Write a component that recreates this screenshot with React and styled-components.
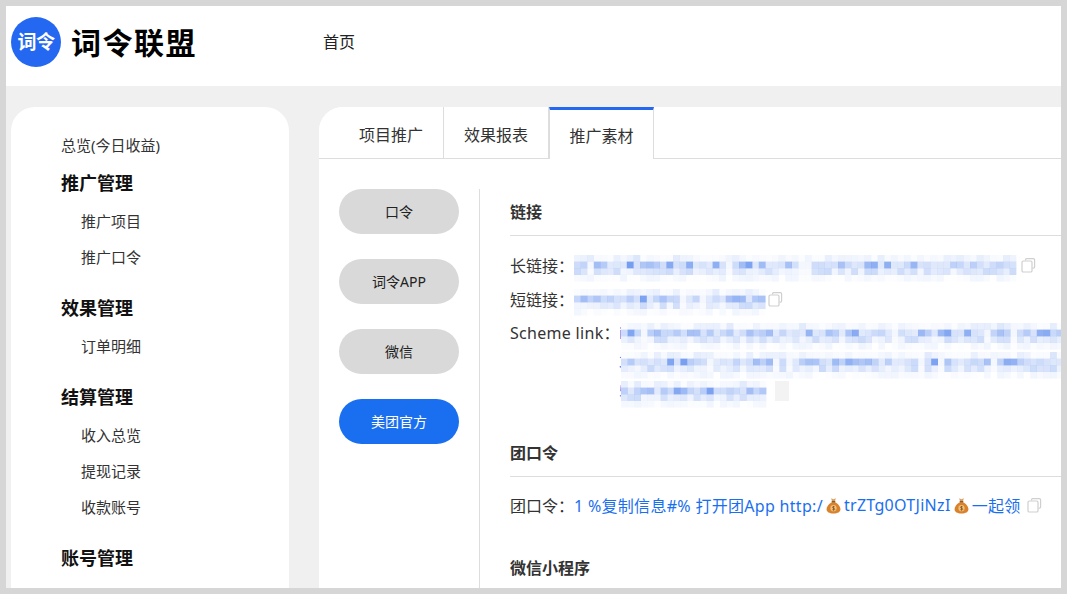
import React from "react";
import styled, { createGlobalStyle } from "styled-components";

const Global = createGlobalStyle`
  html, body { margin: 0; padding: 0; background: #d6d6d6; }
  * { box-sizing: border-box; }
  body { font-family: "Noto Sans", "Noto Sans CJK SC", sans-serif; color: #333; }
`;
const Frame = styled.div`
  width: 1067px; height: 594px; padding: 6px; overflow: hidden; background: #d6d6d6;
`;
const Page = styled.div`
  width: 1055px; height: 582px; overflow: hidden; background: #f0f0f0;
  display: flex; flex-direction: column;
`;
const Header = styled.header`
  flex: none; height: 80px; background: #fff; display: flex; align-items: center; padding: 0 0 8px 5px;
`;
const LogoMark = styled.div`
  width: 50px; height: 50px; border-radius: 50%; background: #2468f2; color: #fff;
  font-size: 19px; font-weight: 700; line-height: 48px; text-align: center; flex: none;
  font-family: "Noto Sans CJK SC", sans-serif; letter-spacing: -0.5px;
`;
const Brand = styled.div`
  margin-left: 10px; width: 252px; font-size: 30px; font-weight: 700; color: #000; letter-spacing: 1.5px;
  font-family: "Noto Sans CJK SC", sans-serif; line-height: 38px; padding-bottom: 2px;
`;
const TopLink = styled.a`
  font-size: 16px; color: #222; font-family: "Noto Sans CJK SC", sans-serif; padding-bottom: 2px;
`;
const Body = styled.div`
  flex: none; display: flex; gap: 30px; padding: 21px 0 0 5px; align-items: flex-start;
`;
const Sidebar = styled.nav`
  flex: none; width: 278px; height: 520px; background: #fff; border-radius: 24px;
  padding: 20px 0 0 50px; font-family: "Noto Sans", "Noto Sans CJK SC", sans-serif;
`;
const Overview = styled.div`
  font-size: 15px; line-height: 36px; height: 36px; color: #333;
`;
const Group = styled.div`
  margin-bottom: 13px;
`;
const GroupTitle = styled.div`
  font-size: 18px; font-weight: 700; line-height: 40px; color: #111;
`;
const NavItem = styled.div`
  font-size: 15px; line-height: 36px; padding-left: 20px; color: #333;
`;
const Main = styled.main`
  flex: none; width: 780px; height: 520px; background: #fff; border-radius: 24px 0 0 0; overflow: hidden;
  font-family: "Noto Sans", "Noto Sans CJK SC", sans-serif;
`;
const Tabs = styled.div`
  display: flex; height: 52px; border-bottom: 1px solid #ddd;
`;
const Tab = styled.div`
  height: ${p => (p.$active ? "52px" : "51px")};
  width: ${p => p.$w}px; flex: none; text-align: center;
  font-size: 16px; color: #333; line-height: ${p => (p.$active ? "52px" : "56px")};
  padding-left: ${p => p.$pl || 0}px;
  border-right: 1px solid #ddd;
  border-left: ${p => (p.$active ? "1px solid #ddd" : "none")};
  border-top: ${p => (p.$active ? "3px solid #2468f2" : "none")};
  background: #fff;
`;
const Pane = styled.div`
  display: flex; padding: 30px 0 0 20px;
`;
const SideTabs = styled.div`
  flex: none; width: 120px; margin-right: 20px; display: flex; flex-direction: column; gap: 25px;
`;
const Pill = styled.div`
  height: 45px; border-radius: 23px; text-align: center; line-height: 45px; font-size: 14px;
  background: ${p => (p.$active ? "#1a6ff0" : "#d9d9d9")};
  color: ${p => (p.$active ? "#fff" : "#222")};
`;
const Content = styled.div`
  flex: none; width: 620px; border-left: 1px solid #ddd; padding-left: 30px; height: 420px;
`;
const SectionTitle = styled.h3`
  margin: 0; height: 47px; line-height: 46px; font-size: 16px; font-weight: 700; color: #333;
  border-bottom: ${p => (p.$plain ? "none" : "1px solid #ddd")};
  margin-top: ${p => p.$top || 0}px;
`;
const Rows = styled.div`
  padding-top: ${p => p.$pt ?? 12}px;
`;
const Row = styled.div`
  display: flex; align-items: center; height: 34px; font-size: 16px; color: #333; white-space: nowrap;
`;
const SchemeRow = styled.div`
  display: flex; align-items: flex-start; font-size: 16px; color: #333; padding-top: 3px;
`;
const SchemeLabel = styled.div`
  width: 109px; flex: none; line-height: 29px; white-space: nowrap; letter-spacing: .3px;
`;
const SchemeLines = styled.div`
  display: flex; flex-direction: column; gap: 9px; padding-top: 4px;
`;
const SchemeLine = styled.div`
  display: flex; align-items: center;
`;
const LeadChar = styled.span`
  display: block; width: 2px; font-size: 16px; line-height: 20px; color: #1a6ff0; flex: none;
`;
const Link = styled.span`
  color: #1a6ff0; display: inline-flex; align-items: center; gap: 3px; white-space: nowrap; letter-spacing: .3px;
`;
const CopyWrap = styled.span`
  display: inline-flex; margin-left: ${p => p.$ml ?? 6}px; flex: none;
`;
const Patch = styled.span`
  display: block; width: 14px; height: 20px; margin-left: 6px; background: #f3f3f3;
`;
const MosaicSvg = styled.svg`
  display: block; flex: none; overflow: visible;
`;

function Mosaic({ width, seed = 1 }) {
  const cell = 6.6;
  const cols = Math.round(width / cell);
  let s = seed * 9301 + 49297;
  const rnd = () => {
    s = (s * 9301 + 49297) % 233280;
    return s / 233280;
  };
  const rects = [];
  for (let x = 0; x < cols; x++) {
    const gap = rnd() < 0.06;
    const top = 0.02 + rnd() * rnd() * 0.16;
    const mid = gap ? 0.05 : 0.14 + rnd() * rnd() * 0.58;
    const low = gap ? 0.03 : 0.05 + rnd() * 0.2;
    const foot = rnd() * 0.07;
    [top, mid, low, foot].forEach((o, y) =>
      rects.push(<rect key={x + "-" + y} x={x * cell} y={y * cell} width={cell + 0.2} height={cell + 0.2} fill="#2f6be8" opacity={o} />)
    );
  }
  return (
    <MosaicSvg width={width} height={20} viewBox={`0 0 ${width} 20`}>
      <rect x="0" y="0" width="12" height="20" fill="#fff" />
      {rects}
    </MosaicSvg>
  );
}

const CopyIcon = ({ ml }) => (
  <CopyWrap $ml={ml}>
    <svg width="15" height="15" viewBox="0 0 15 15" fill="none" stroke="#cfcfcf" strokeWidth="1.2">
      <path d="M4.5 2.6V1.900c0-.7.5-1.200 1.200-1.200h6.700c.7 0 1.200.5 1.200 1.200v7c0 .7-.5 1.200-1.200 1.200h-.9" />
      <rect x="1" y="3" width="10" height="11" rx="1.300" fill="#fff" />
    </svg>
  </CopyWrap>
);

const MoneyBag = () => (
  <svg width="15" height="17" viewBox="0 0 15 17">
    <path d="M5.200 1.200 7.500 2.200 9.800 1.200 9 4.600H6z" fill="#d9a066" />
    <path d="M6 5.200h3c3 1.400 5.400 4.200 5.400 7 0 2.800-2.600 4.200-6.900 4.200S.6 15 .6 12.200c0-2.800 2.400-5.600 5.400-7z" fill="#d9822b" />
    <rect x="5.600" y="4" width="3.800" height="1.400" rx=".6" fill="#8a5a2b" />
    <circle cx="7.500" cy="11.200" r="3.100" fill="#f0c27a" />
    <path d="M8.700 9.900c-.5-.5-2.200-.6-2.300.4-.1 1.100 2.500.7 2.400 1.900-.1 1-1.900 1-2.500.3M7.500 8.900v4.600" stroke="#7a4a1c" strokeWidth=".7" fill="none" />
  </svg>
);

const groups = [
  { title: "推广管理", items: ["推广项目", "推广口令"] },
  { title: "效果管理", items: ["订单明细"] },
  { title: "结算管理", items: ["收入总览", "提现记录", "收款账号"] },
  { title: "账号管理", items: [] },
];

export default function App() {
  return (
    <Frame>
      <Global />
      <Page>
        <Header>
          <LogoMark>词令</LogoMark>
          <Brand>词令联盟</Brand>
          <TopLink>首页</TopLink>
        </Header>
        <Body>
          <Sidebar>
            <Overview>总览(今日收益)</Overview>
            {groups.map(g => (
              <Group key={g.title}>
                <GroupTitle>{g.title}</GroupTitle>
                {g.items.map(i => <NavItem key={i}>{i}</NavItem>)}
              </Group>
            ))}
          </Sidebar>
          <Main>
            <Tabs>
              <Tab $w={125} $pl={20}>项目推广</Tab>
              <Tab $w={105}>效果报表</Tab>
              <Tab $w={105} $active>推广素材</Tab>
            </Tabs>
            <Pane>
              <SideTabs>
                <Pill>口令</Pill>
                <Pill>词令APP</Pill>
                <Pill>微信</Pill>
                <Pill $active>美团官方</Pill>
              </SideTabs>
              <Content>
                <SectionTitle>链接</SectionTitle>
                <Rows>
                  <Row>长链接：<Mosaic width={441} seed={3} /><CopyIcon /></Row>
                  <Row>短链接：<Mosaic width={193} seed={7} /><CopyIcon ml={1} /></Row>
                  <SchemeRow>
                    <SchemeLabel>Scheme link：</SchemeLabel>
                    <SchemeLines>
                      <SchemeLine><LeadChar>i</LeadChar><Mosaic width={445} seed={11} /></SchemeLine>
                      <SchemeLine><LeadChar>3</LeadChar><Mosaic width={445} seed={17} /></SchemeLine>
                      <SchemeLine><LeadChar>5</LeadChar><Mosaic width={148} seed={23} /><Patch /></SchemeLine>
                    </SchemeLines>
                  </SchemeRow>
                </Rows>
                <SectionTitle $top={29}>团口令</SectionTitle>
                <Rows $pt={11}>
                  <Row>团口令：<Link>1 %复制信息#% 打开团App http:/<MoneyBag />trZTg0OTJiNzI<MoneyBag />一起领</Link><CopyIcon /></Row>
                </Rows>
                <SectionTitle $plain $top={23}>微信小程序</SectionTitle>
              </Content>
            </Pane>
          </Main>
        </Body>
      </Page>
    </Frame>
  );
}
